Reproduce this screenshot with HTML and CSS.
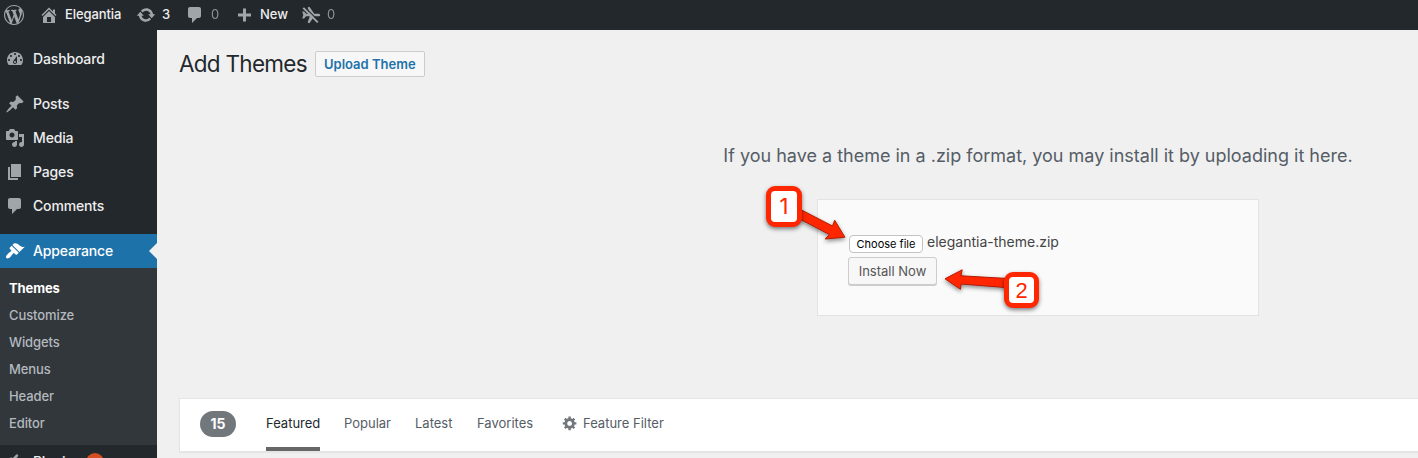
FILE: index.html
```html
<!DOCTYPE html>
<html lang="en">
<head>
<meta charset="utf-8">
<title>Add Themes</title>
<link rel="stylesheet" href="styles.css">
</head>
<body>
<header class="adminbar">
  <svg class="icon bar-wp" viewBox="0 0 20 20"><path d="M20 10c0-5.51-4.49-10-10-10C4.48 0 0 4.49 0 10c0 5.52 4.48 10 10 10 5.51 0 10-4.48 10-10zM7.78 15.37L4.37 6.22c.55-.02 1.17-.08 1.17-.08.5-.06.44-1.13-.06-1.11 0 0-1.45.11-2.37.11-.18 0-.37 0-.58-.01C4.12 2.69 6.87 1.11 10 1.11c2.33 0 4.45.87 6.05 2.34-.68-.11-1.65.39-1.65 1.58 0 .74.45 1.36.9 2.1.35.61.55 1.36.55 2.46 0 1.49-1.4 5-1.4 5l-3.03-8.37c.54-.02.82-.17.82-.17.5-.05.44-1.25-.06-1.22 0 0-1.44.12-2.38.12-.87 0-2.33-.12-2.33-.12-.5-.03-.56 1.2-.06 1.22l.92.08 1.26 3.41zM17.41 10c.24-.64.74-1.87.43-4.25.7 1.29 1.05 2.71 1.05 4.25 0 3.29-1.73 6.24-4.4 7.78.97-2.59 1.94-5.2 2.92-7.78zM6.1 18.09C3.12 16.65 1.11 13.53 1.11 10c0-1.3.23-2.48.72-3.59C3.25 10.3 4.67 14.2 6.1 18.09zm4.03-6.63l2.58 6.98c-.86.29-1.76.45-2.71.45-.79 0-1.57-.11-2.29-.33.81-2.38 1.62-4.74 2.42-7.1z"/></svg>
  <a class="bar-item bar-site"><svg class="icon" viewBox="0 0 20 20"><path d="M16 8.5l1.53 1.53-1.06 1.06L10 4.6l-6.47 6.49-1.06-1.06L10 2.5l4 4v-2h2v4zm-6-2.46l6 5.99V18H4v-5.97zM12 17v-5H8v5h4z"/></svg><span>Elegantia</span></a>
  <a class="bar-item bar-updates"><svg class="icon" viewBox="0 0 20 20"><path d="M10.2 3.28c3.53 0 6.43 2.61 6.92 6h2.08l-3.5 4-3.5-4h2.32c-.45-1.97-2.21-3.45-4.32-3.45-1.45 0-2.73.71-3.54 1.78L4.95 5.66C6.23 4.2 8.11 3.28 10.2 3.28zm-.4 13.44c-3.52 0-6.43-2.61-6.92-6H.8l3.5-4c1.17 1.33 2.33 2.67 3.5 4H5.48c.45 1.97 2.21 3.45 4.32 3.45 1.45 0 2.73-.71 3.54-1.78l1.71 1.95c-1.28 1.46-3.15 2.38-5.25 2.38z"/></svg><span>3</span></a>
  <a class="bar-item bar-comments"><svg class="icon" viewBox="0 0 20 20"><path d="M5 2h9c1.1 0 2 .9 2 2v7c0 1.1-.9 2-2 2h-2l-5 5v-5H5c-1.1 0-2-.9-2-2V4c0-1.1.9-2 2-2z"/></svg><span class="zero">0</span></a>
  <a class="bar-item bar-new"><svg class="icon" viewBox="0 0 20 20"><path d="M17 8.5v3h-5v5H9v-5H4v-3h5v-5h3v5z"/></svg><span>New</span></a>
  <a class="bar-item bar-plane"><svg class="icon" viewBox="0 0 20 20"><path d="M1.200 6.600h1.900l2 2.100h3.700L6.600 2.600 8.400 1.700l4.900 7h4.200c1 0 1.700.6 1.700 1.300s-.7 1.300-1.700 1.300h-4.200l-4.900 7-1.800-.9 2.200-6.100H5.100l-2 2.100H1.200L2.300 10z"/><path class="plane-gap" d="M3.500 1.900l14.500 14.500"/><path class="plane-slash" d="M2.300 2.900l14.500 14.500"/></svg><span class="zero">0</span></a>
</header>
<div class="layout">
  <nav class="sidebar">
    <a class="menu-item"><svg class="icon" viewBox="0 0 20 20"><path fill-rule="evenodd" d="M3.760 16h12.480c1.100-1.370 1.760-3.110 1.760-5 0-4.420-3.580-8-8-8s-8 3.580-8 8c0 1.890.66 3.630 1.760 5zM10 4c.55 0 1 .45 1 1s-.45 1-1 1-1-.45-1-1 .45-1 1-1zM6 6c.55 0 1 .45 1 1s-.45 1-1 1-1-.45-1-1 .45-1 1-1zm8 0c.55 0 1 .45 1 1s-.45 1-1 1-1-.45-1-1 .45-1 1-1zm-5.370 5.550L12 7v6c0 1.100-.9 2-2 2s-2-.9-2-2c0-.57.24-1.080.63-1.450zM4 10c.55 0 1 .45 1 1s-.45 1-1 1-1-.45-1-1 .45-1 1-1zm12 0c.55 0 1 .45 1 1s-.45 1-1 1-1-.45-1-1 .45-1 1-1zm-5 3c0-.55-.45-1-1-1s-1 .45-1 1 .45 1 1 1 1-.45 1-1z"/></svg><span>Dashboard</span></a>
    <div class="menu-gap"></div>
    <a class="menu-item"><svg class="icon" viewBox="0 0 20 20"><path d="M10.440 3.020l1.820-1.820 6.360 6.350-1.830 1.820c-1.050-.68-2.480-.57-3.410.36l-.75.75c-.92.93-1.040 2.350-.35 3.410l-1.830 1.820-2.410-2.410-2.800 2.790c-.42.42-3.380 2.710-3.800 2.290s1.860-3.390 2.280-3.810l2.790-2.790L4.100 9.360l1.830-1.820c1.050.69 2.480.57 3.400-.36l.75-.75c.93-.92 1.050-2.350.36-3.410z"/></svg><span>Posts</span></a>
    <a class="menu-item"><svg class="icon" viewBox="0 0 20 20"><path fill-rule="evenodd" d="M13 11V4c0-.55-.45-1-1-1h-1.670L9 1H5L3.670 3H2c-.55 0-1 .45-1 1v7c0 .55.45 1 1 1h10c.55 0 1-.45 1-1zM7 4.500c1.380 0 2.500 1.120 2.500 2.500S8.380 9.500 7 9.500 4.500 8.380 4.500 7 5.620 4.500 7 4.500zM14 6h5v10.500c0 1.380-1.120 2.500-2.500 2.500S14 17.880 14 16.500s1.120-2.500 2.500-2.500c.17 0 .34.02.5.05V9h-3V6zm-4 8.050V13h2v3.500c0 1.380-1.120 2.500-2.500 2.500S7 17.880 7 16.500 8.120 14 9.500 14c.17 0 .34.02.5.05z"/></svg><span>Media</span></a>
    <a class="menu-item"><svg class="icon" viewBox="0 0 20 20"><path d="M6 15V2h10v13H6zm-1 1h8v2H3V5h2v11z"/></svg><span>Pages</span></a>
    <a class="menu-item"><svg class="icon" viewBox="0 0 20 20"><path d="M5 2h9c1.100 0 2 .9 2 2v7c0 1.100-.9 2-2 2h-2l-5 5v-5H5c-1.100 0-2-.9-2-2V4c0-1.100.9-2 2-2z"/></svg><span>Comments</span></a>
    <div class="menu-gap"></div>
    <a class="menu-item current"><svg class="icon" viewBox="0 0 20 20"><path d="M14.480 11.060L7.410 3.990l1.500-1.500c.5-.56 2.300-.47 3.510.32 1.210.8 1.430 1.280 2.910 2.100 1.180.64 2.450 1.260 4.450.85zm-.71.71L6.700 4.700 4.930 6.470c-.39.39-.39 1.020 0 1.410l1.060 1.060c.39.39.39 1.030 0 1.420-.6.6-1.430 1.110-2.210 1.690-.35.26-.7.53-1.010.84C1.430 14.230.4 16.080 1.400 17.070c.99 1 2.840-.03 4.180-1.360.31-.31.58-.66.85-1.020.57-.78 1.080-1.610 1.690-2.210.39-.39 1.020-.39 1.410 0l1.060 1.060c.39.39 1.020.39 1.410 0z"/></svg><span>Appearance</span></a>
    <div class="submenu">
      <a class="active">Themes</a>
      <a>Customize</a>
      <a>Widgets</a>
      <a>Menus</a>
      <a>Header</a>
      <a>Editor</a>
    </div>
    <a class="menu-item"><svg class="icon" viewBox="0 0 20 20"><path d="M13.110 4.360L9.870 7.600 8 5.730l3.240-3.240c.35-.34 1.050-.2 1.560.32.52.51.66 1.210.31 1.550zm-8 1.770l.91-1.120 9.010 9.010-1.190.84c-.71.71-2.630 1.160-3.820 1.160H6.140L4.900 17.260c-.59.59-1.540.59-2.120 0-.59-.58-.59-1.530 0-2.120l1.240-1.240v-3.880c0-1.130.4-3.190 1.090-3.890zm7.260 3.970l3.240-3.240c.34-.35 1.040-.21 1.550.31.52.51.66 1.210.31 1.550l-3.240 3.250z"/></svg><span>Plugins</span><b class="bubble"></b></a>
  </nav>
  <main class="content">
    <div class="title-row">
      <h1>Add Themes</h1>
      <a class="upload-link">Upload Theme</a>
    </div>
    <p class="upload-help">If you have a theme in a .zip format, you may install it by uploading it here.</p>
    <form class="upload-form">
      <div class="file-row"><span class="choose">Choose file</span><span class="file-name">elegantia-theme.zip</span></div>
      <span class="install">Install Now</span>
    </form>
    <div class="filter-bar">
      <span class="count">15</span>
      <a class="tab tab-featured">Featured</a>
      <a class="tab tab-popular">Popular</a>
      <a class="tab tab-latest">Latest</a>
      <a class="tab tab-favorites">Favorites</a>
      <a class="tab tab-filter"><svg class="gear" viewBox="0 0 20 20"><path fill-rule="evenodd" d="M18 12h-2.180c-.17.7-.44 1.350-.81 1.930l1.540 1.540-2.100 2.100-1.540-1.540c-.58.36-1.230.63-1.910.79V19H8v-2.180c-.68-.16-1.330-.43-1.910-.79l-1.540 1.540-2.120-2.120 1.540-1.540c-.36-.58-.63-1.230-.79-1.910H1V9.030h2.170c.16-.7.44-1.350.8-1.940L2.430 5.550l2.100-2.100 1.540 1.540c.58-.37 1.240-.64 1.930-.81V2h3v2.180c.68.16 1.330.43 1.910.79l1.540-1.540 2.120 2.120-1.540 1.540c.36.59.64 1.240.8 1.940H18V12zm-8.500 1.500c1.660 0 3-1.340 3-3s-1.340-3-3-3-3 1.340-3 3 1.340 3 3 3z"/></svg>Feature Filter</a>
    </div>
  </main>
</div>
<svg class="callout-arrows" viewBox="0 0 1418 458">
  <path d="M801.500 210l31 16 2.200-5.800 10.200 17-19.700 1.800 4.200-4.500L797 217.500z"/>
  <path d="M1008 278.500l-47-2.700 1.200-6-17.200 9 15.500 10.500.5-5.300 47 3.700z"/>
</svg>
<div class="callout callout-one">1</div>
<div class="callout callout-two">2</div>
</body>
</html>
```
FILE: styles.css
```css
* { box-sizing: border-box; }
body {
  margin: 0;
  width: 1418px;
  height: 458px;
  overflow: hidden;
  position: relative;
  background: #f0f0f0;
  font-family: Inter, "Liberation Sans", sans-serif;
  white-space: nowrap;
}
.icon { width: 20px; height: 20px; flex: none; fill: #a0a5aa; }

/* Top toolbar */
.adminbar {
  display: flex;
  align-items: center;
  height: 30px;
  padding-left: 4px;
  padding-bottom: 1px;
  background: #23282d;
  color: #eee;
  font-size: 13px;
  font-weight: 500;
}
.bar-item { display: flex; align-items: center; }
.bar-item span { padding-bottom: 1px; }
.zero { color: #a0a5aa; opacity: .85; font-weight: 400; }
.bar-site { margin-left: 15px; width: 97px; gap: 6px; letter-spacing: -.1px; }
.bar-updates { width: 49px; gap: 6px; }
.bar-comments { width: 49px; gap: 6px; }
.bar-new { width: 67px; gap: 6px; }
.bar-plane { gap: 6px; }
.plane-gap { fill: none; stroke: #23282d; stroke-width: 1.3; }
.plane-slash { fill: none; stroke: #a0a5aa; stroke-width: 2; }

.layout { display: flex; height: 428px; }

/* Main menu */
.sidebar { width: 157px; flex: none; padding-top: 12px; background: #23282d; overflow: hidden; }
.menu-item {
  display: flex;
  align-items: center;
  position: relative;
  height: 34px;
  padding-left: 5px;
  gap: 8px;
  color: #eee;
  font-size: 14px;
  font-weight: 500;
  letter-spacing: -.15px;
}
.menu-item span { padding-bottom: 2px; }
.menu-gap { height: 11px; }
.current { background: #1d72aa; color: #fff; }
.current .icon { fill: #fff; }
.current::after {
  content: "";
  position: absolute;
  right: 0;
  top: 9px;
  border: 8px solid transparent;
  border-left: 0;
  border-right-color: #f0f0f0;
}
.submenu {
  display: flex;
  flex-direction: column;
  height: 177px;
  padding: 7px 0 8px 9px;
  background: #32373c;
  color: #b4b9be;
  font-size: 13px;
  font-weight: 500;
  letter-spacing: -.1px;
}
.submenu a { height: 27px; line-height: 26px; }
.submenu .active { color: #fff; font-weight: 700; }
.bubble { width: 18px; height: 18px; margin-left: -3px; border-radius: 9px; background: #d54e21; }

/* Page content; the theme browser is wider than the viewport */
.content { width: 1261px; flex: none; padding-left: 22px; overflow: hidden; }
.title-row { display: flex; align-items: center; height: 26px; margin-top: 21px; }
h1 {
  width: 136px;
  margin: 0;
  color: #23282d;
  font-size: 22.5px;
  font-weight: 400;
  line-height: 26px;
  letter-spacing: -.72px;
}
.upload-link {
  height: 26px;
  padding: 0 8px;
  border: 1px solid #ccc;
  border-radius: 2px;
  background: #f7f7f7;
  color: #1d72aa;
  font-size: 13px;
  font-weight: 600;
  line-height: 25px;
}
.upload-help {
  width: 1718px;
  margin: 66px 0 0;
  color: #555d66;
  font-size: 18px;
  line-height: 26px;
  text-align: center;
}
.upload-form {
  width: 442px;
  height: 117px;
  margin: 30px 0 0 638px;
  padding: 34px 30px 0;
  border: 1px solid #e3e3e3;
  background: #fafafa;
}
.file-row { display: flex; height: 22px; gap: 4px; padding-left: 1px; }
.choose {
  width: 74px;
  height: 18px;
  margin-top: 1px;
  border: 1px solid #c3c3c3;
  border-radius: 4px;
  background: #fff;
  color: #000;
  font-size: 11px;
  line-height: 17px;
  text-align: center;
}
.file-name { color: #444; font-size: 14px; line-height: 16px; }
.install {
  display: block;
  width: 89px;
  height: 28px;
  margin-top: 1px;
  border: 1px solid #ccc;
  border-radius: 3px;
  background: #f7f7f7;
  box-shadow: 0 1px 0 #ccc;
  color: #555;
  font-size: 13px;
  line-height: 27px;
  text-align: center;
}
.filter-bar {
  display: flex;
  width: 1718px;
  height: 54px;
  margin-top: 82px;
  padding-left: 20px;
  border: 1px solid #e5e5e5;
  background: #fff;
  box-shadow: 0 1px 1px rgba(0, 0, 0, .04);
  color: #555d66;
  font-size: 13px;
}
.count {
  width: 36px;
  height: 26px;
  margin: 12px 30px 0 0;
  border-radius: 13px;
  background: #72777c;
  color: #fff;
  font-size: 14px;
  font-weight: 700;
  line-height: 26px;
  text-align: center;
}
.tab { height: 52px; line-height: 49px; }
.tab-featured { width: 54px; margin-right: 24px; border-bottom: 4px solid #666; color: #23282d; }
.tab-popular { width: 71px; }
.tab-latest { width: 62px; }
.tab-favorites { width: 85px; }
.tab-filter { display: flex; gap: 5px; }
.gear { width: 16px; height: 16px; margin-top: 16px; fill: #72777c; }

/* Numbered callouts over the form */
.callout-arrows {
  position: absolute;
  left: 0;
  top: 0;
  width: 1418px;
  height: 458px;
  fill: #ff2600;
  stroke: #b51b00;
  stroke-width: 1;
  filter: drop-shadow(0 2px 2px rgba(0, 0, 0, .45));
}
.callout {
  position: absolute;
  border: 5px solid #ff2600;
  border-radius: 9px;
  background: #fff;
  box-shadow: 0 2px 4px rgba(0, 0, 0, .5);
  color: #ff2600;
  text-align: center;
}
.callout-one { left: 766px; top: 186px; width: 36px; height: 41px; font-size: 22px; line-height: 30px; }
.callout-two {
  left: 1004px;
  top: 272px;
  width: 35px;
  height: 36px;
  font-family: "Liberation Sans", Arial, sans-serif;
  font-size: 22px;
  line-height: 28px;
}
```
